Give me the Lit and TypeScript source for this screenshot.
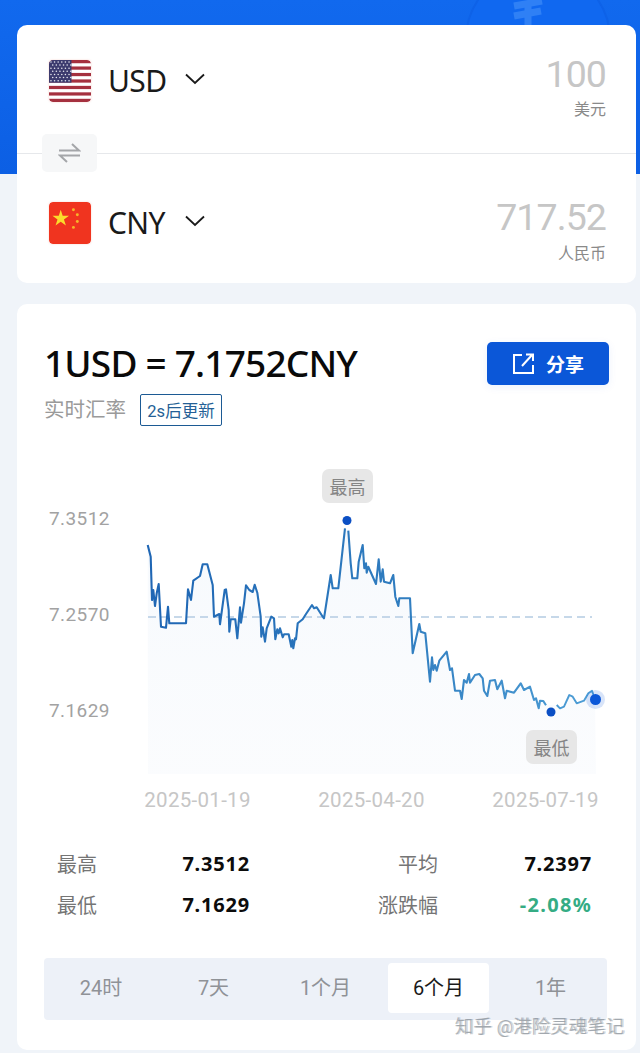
import { LitElement, html, css, svg } from "lit";
import { customElement } from "lit/decorators.js";

const toReal5 = (p: number[][]) => p.map(([x, y]) => [130 + x / 3, 510 + y / 3]);
const toReal6 = (p: number[][]) => p.map(([x, y]) => [380 + x / 3, 600 + y / 3]);
const toReal9 = (p: number[][]) => p.map(([x, y]) => [340 + x / 3, 530 + y / 3]);
const a = toReal5([[53,105],[62,140],[66,270],[70,240],[75,288],[80,250],[86,222],[93,350],[108,353],[114,290],[118,340],[168,340],[174,238],[183,270],[190,212],[210,198],[218,163],[232,163],[248,225],[252,320],[268,312],[270,343],[284,240],[288,238],[296,300],[298,365],[302,328],[316,328],[322,385],[330,292],[333,338],[342,280],[348,226],[358,240],[368,246],[374,224],[382,248],[392,320],[394,380],[398,352],[405,395],[410,355],[424,320],[432,325],[436,388],[442,358],[446,370],[450,355],[458,382],[462,373],[476,373],[484,410],[487,390],[490,415],[495,385],[498,388],[503,340],[518,328],[528,312],[546,285],[552,295],[560,292],[578,320],[582,325],[602,195],[608,235],[625,235],[640,100],[645,55]]);
const b = toReal9([[25,2],[32,100],[37,145],[52,145],[56,95],[68,45],[73,115],[78,100],[80,128],[85,110],[108,162],[116,88],[122,155],[128,118],[132,155],[150,160],[160,135],[166,200],[175,228],[178,205],[210,205]]);
const c = toReal6([[98,160],[118,72],[122,95],[136,100],[150,245],[156,172],[160,210],[165,195],[170,212],[178,182],[200,155],[210,210],[216,205],[225,272],[240,272],[245,297],[252,240],[260,248],[267,222],[270,248],[285,225],[298,222],[308,235],[312,272],[322,288],[330,242],[345,240],[352,268],[365,242],[375,295],[380,272],[402,278],[422,250],[432,270],[450,260],[462,300],[468,295],[476,325],[480,302],[490,303],[498,316]]);
const d = toReal6([[530,315],[540,325],[552,320],[568,285],[578,290],[590,310],[612,302],[625,280],[636,272],[645,298]]);
const toPts = (p: number[][]) => p.map((q) => q.map((n) => n.toFixed(1)).join(",")).join(" ");
const first = [...a];
const second = [...b, ...c];
const all = [...first, ...second, ...d];
// The chart's svg uses the card's coordinates: origin at the page point (17,304).
const OX = 17, OY = 304;

@customElement("app-root")
export class AppRoot extends LitElement {
  static styles = css`
    :host {
      display: block;
      width: 640px;
      height: 1053px;
      position: relative;
      overflow: hidden;
      background: #f0f4f9;
      font-family: "Roboto", "Noto Sans CJK SC", sans-serif;
    }
    .hero {
      position: absolute;
      left: 0; top: 0; right: 0;
      height: 174px;
      background: linear-gradient(180deg, #1169ee 0%, #0c5fe4 100%);
      overflow: hidden;
    }
    .content { position: relative; padding: 25px 4px 0 17px; display: flex; flex-direction: column; gap: 21px; }
    .card { background: #fff; border-radius: 10px; position: relative; }
    .ex { height: 258px; display: flex; flex-direction: column; }
    .row { flex: 1; display: flex; align-items: flex-start; justify-content: space-between; padding: 0 30px 0 32px; }
    .row.top { height: 129px; flex: none; padding-top: 35px; box-sizing: border-box; border-bottom: 1px solid #e6e8eb; }
    .row.bot { padding-top: 48px; }
    .left { display: flex; align-items: center; }
    .flag { width: 42px; height: 42px; border-radius: 4px; display: block; box-shadow: 0 0 2px rgba(235, 110, 90, 0.35); }
    .code { font-size: 30px; line-height: 42px; color: #1a1a1a; margin-left: 17px; width: 61px; font-family: "Noto Sans", sans-serif; letter-spacing: -0.6px; }
    .chev { margin-left: 16px; margin-top: -4px; }
    .val { text-align: right; margin-top: -5px; }
    .bot .val { margin-top: -4px; }
    .num { font-size: 37.5px; font-weight: 400; line-height: 38px; color: #c6c6c6; letter-spacing: -0.9px; }
    .unit { font-size: 16px; line-height: 22px; color: #8a8a8a; margin-top: 6px; }
    .bot .unit { margin-top: 7px; }
    .swap {
      position: absolute; left: 25px; top: 109px; width: 55px; height: 38px;
      background: #f6f7f8; border-radius: 5px;
      display: flex; align-items: center; justify-content: center;
    }
    .chart-card { height: 746px; box-sizing: border-box; }
    .head { display: flex; justify-content: space-between; padding: 37px 27px 0; }
    .rate { font-size: 37px; line-height: 44px; font-weight: 500; color: #0a0a0a; font-family: "Noto Sans", sans-serif; letter-spacing: -0.8px; }
    .share {
      width: 122px; height: 43px; background: #0b57d8; border-radius: 5px; color: #fff; border: 0;
      display: flex; align-items: center; justify-content: center; gap: 11px;
      font-size: 19px; font-weight: 700; font-family: "Noto Sans CJK SC", sans-serif;
      box-shadow: 0 2px 8px rgba(11, 87, 216, 0.08); margin-top: 1px;
    }
    .sub { display: flex; align-items: center; margin-top: 9px; padding: 0 27px; }
    .sub .t { font-size: 20.5px; color: #9a9a9a; width: 96px; line-height: 32px; }
    .tag {
      height: 32px; width: 82px; box-sizing: border-box; border: 1.5px solid #1c5a94; border-radius: 2px;
      color: #245f96; font-size: 16.5px; display: flex; align-items: center; justify-content: center;
    }
    .chart { position: relative; height: 417px; }
    .plot { position: absolute; left: 0; top: 0; width: 619px; height: 417px; }
    .yl { position: absolute; left: 32px; font-size: 19px; color: #a2a2a2; line-height: 22px; letter-spacing: 0.4px; }
    .xl { position: absolute; top: 362px; font-size: 20.5px; color: #c6c6c6; line-height: 24px; width: 120px; text-align: center; letter-spacing: 0.3px; white-space: nowrap; }
    .pill {
      position: absolute; width: 51px; height: 34px; border-radius: 7px; background: #e7e7e7; color: #858585;
      font-size: 18px; display: flex; align-items: center; justify-content: center;
    }
    .stats {
      margin-left: 40px; width: 535px;
      display: grid; grid-template-columns: 113px 80px 188px 1fr; grid-auto-rows: 41px; align-items: center;
    }
    .lab { font-size: 20px; color: #757575; }
    .lab.r { text-align: right; }
    .v { font-size: 20px; font-weight: 700; color: #0c0c0c; text-align: right; letter-spacing: 0.8px; font-family: "Noto Sans", sans-serif; white-space: nowrap; justify-self: end; }
    .v.down { color: #35ac84; letter-spacing: 1.3px; }
    .tabs {
      margin: 33px 0 0 27px; width: 563px; height: 62px; box-sizing: border-box;
      background: #edf1f8; border-radius: 4px; padding: 5px 0 7px;
      display: grid; grid-template-columns: 114px 111px 119px 101px 118px; align-items: stretch;
      font-size: 20px; color: #8f9297;
    }
    .tabs div { display: flex; align-items: center; justify-content: center; border-radius: 4px; padding-bottom: 4px; box-sizing: border-box; }
    .tabs .on { background: #fff; color: #1a1a1a; }
    .tabs .m1 { padding-right: 6px; }
    .tabs .y1 { padding-left: 5px; }
    .mark {
      position: absolute; right: 16px; top: 1016px; font-size: 18.5px; line-height: 22px; color: rgba(110, 120, 130, 0.5);
      text-shadow: 1.5px 0 rgba(110, 120, 130, 0.3);
    }
  `;

  render() {
    const ox = (p: number[][]) => p.map(([x, y]) => [x - OX, y - OY]);
    const area = toPts(ox(all)) + ` ${(596 - OX).toFixed(1)},470 ${(148 - OX).toFixed(1)},470`;
    return html`
      <div class="hero">
        <svg width="640" height="174" viewBox="0 0 640 174">
          <circle cx="538" cy="40" r="72" fill="#1068f0" stroke="#0e62e8" stroke-width="2"></circle>
          <path d="M514 6 L542 1 M514 16 L541 11 M528 3 V26" stroke="#2f80f5" stroke-width="7" fill="none"></path>
        </svg>
      </div>
      <div class="content">
        <section class="card ex">
          <div class="row top">
            <div class="left">
              <svg class="flag" viewBox="0 0 43 43">
                <defs><clipPath id="fc"><rect width="43" height="43" rx="4"></rect></clipPath></defs>
                <g clip-path="url(#fc)">
                  <rect width="43" height="43" fill="#fff"></rect>
                  ${[0, 1, 2, 3, 4, 5, 6].map((i) => svg`<rect y="${i * 6.62}" width="43" height="3.31" fill="#a5313f"></rect>`)}
                  <rect width="23" height="23.2" fill="#3c3b6e"></rect>
                  ${[0, 1, 2, 3, 4, 5, 6].map((r) =>
                    [0, 1, 2, 3, 4, 5].map((k) => svg`<circle cx="${2 + k * 3.7 + (r % 2) * 1.8}" cy="${2 + r * 3.2}" r="0.8" fill="#e6e6ee"></circle>`)
                  )}
                </g>
              </svg>
              <span class="code">USD</span>
              <svg class="chev" width="20" height="12" viewBox="0 0 20 12"><path d="M1 1.5 L10 10 L19 1.5" fill="none" stroke="#1a1a1a" stroke-width="1.8"></path></svg>
            </div>
            <div class="val"><div class="num">100</div><div class="unit">美元</div></div>
          </div>
          <div class="row bot">
            <div class="left">
              <svg class="flag" viewBox="0 0 43 43">
                <rect width="43" height="43" rx="4" fill="#f0341f"></rect>
                <polygon points="12,8 14,14 20.5,14 15.3,18 17.3,24 12,20.3 6.7,24 8.7,18 3.5,14 10,14" fill="#fbdc2c"></polygon>
                <circle cx="25" cy="8" r="1.5" fill="#f7b52a"></circle>
                <circle cx="29" cy="13" r="1.5" fill="#f7b52a"></circle>
                <circle cx="29" cy="20" r="1.5" fill="#f7b52a"></circle>
                <circle cx="25" cy="26" r="1.5" fill="#f7b52a"></circle>
              </svg>
              <span class="code">CNY</span>
              <svg class="chev" width="20" height="12" viewBox="0 0 20 12"><path d="M1 1.5 L10 10 L19 1.5" fill="none" stroke="#1a1a1a" stroke-width="1.8"></path></svg>
            </div>
            <div class="val"><div class="num">717.52</div><div class="unit">人民币</div></div>
          </div>
          <div class="swap">
            <svg width="23" height="20" viewBox="0 0 23 20" fill="none" stroke="#a4a6a9" stroke-width="2">
              <path d="M1 7.5 H21 L14 1"></path>
              <path d="M22 12.5 H2 L9 19"></path>
            </svg>
          </div>
        </section>
        <section class="card chart-card">
          <div class="head">
            <div class="rate">1USD = 7.1752CNY</div>
            <button class="share">
              <svg width="23" height="22" viewBox="0 0 23 22" fill="none" stroke="#fff" stroke-width="2">
                <path d="M10 2 H2 V20 H21 V12"></path>
                <path d="M10 13 L20 2 M14 1.500 H21 V8"></path>
              </svg>
              <span>分享</span>
            </button>
          </div>
          <div class="sub">
            <span class="t">实时汇率</span>
            <span class="tag">2s后更新</span>
          </div>
          <div class="chart">
            <svg class="plot" viewBox="0 122 619 417">
              <defs>
                <linearGradient id="ar" x1="0" y1="0" x2="0" y2="1">
                  <stop offset="0" stop-color="#e3edf8" stop-opacity="0.3"></stop>
                  <stop offset="1" stop-color="#eef3fa" stop-opacity="0.25"></stop>
                </linearGradient>
                <linearGradient id="ln" gradientUnits="userSpaceOnUse" x1="131" y1="0" x2="578" y2="0">
                  <stop offset="0" stop-color="#1f66b4"></stop>
                  <stop offset="0.55" stop-color="#2f7cbf"></stop>
                  <stop offset="1" stop-color="#4f9fd6"></stop>
                </linearGradient>
              </defs>
              <polygon points="${area}" fill="url(#ar)"></polygon>
              <line x1="131" y1="313" x2="575" y2="313" stroke="#b4cbe2" stroke-width="1.4" stroke-dasharray="8 5"></line>
              <polyline points="${toPts(ox(first))}" fill="none" stroke="url(#ln)" stroke-width="2.1" stroke-linejoin="round"></polyline>
              <polyline points="${toPts(ox(second))}" fill="none" stroke="url(#ln)" stroke-width="2.1" stroke-linejoin="round"></polyline>
              <polyline points="${toPts(ox(d))}" fill="none" stroke="url(#ln)" stroke-width="1.9" stroke-linejoin="round"></polyline>
              <circle cx="330" cy="216.500" r="4.500" fill="#0b4fc4"></circle>
              <circle cx="534" cy="408" r="4.500" fill="#0b4fc4"></circle>
              <circle cx="578.500" cy="395.500" r="9.500" fill="#0b57d8" fill-opacity="0.16"></circle>
              <circle cx="578.500" cy="395.500" r="5.500" fill="#0b57d8"></circle>
            </svg>
            <div class="pill" style="left:305px;top:43px">最高</div>
            <div class="pill" style="left:509px;top:304px">最低</div>
            <div class="yl" style="top:82px">7.3512</div>
            <div class="yl" style="top:178px">7.2570</div>
            <div class="yl" style="top:274px">7.1629</div>
            <div class="xl" style="left:120.500px">2025-01-19</div>
            <div class="xl" style="left:294.500px">2025-04-20</div>
            <div class="xl" style="left:468.500px">2025-07-19</div>
          </div>
          <div class="stats">
            <span class="lab">最高</span><span class="v">7.3512</span><span class="lab r">平均</span><span class="v">7.2397</span>
            <span class="lab">最低</span><span class="v">7.1629</span><span class="lab r">涨跌幅</span><span class="v down">-2.08%</span>
          </div>
          <div class="tabs">
            <div>24时</div><div>7天</div><div class="m1">1个月</div><div class="on">6个月</div><div class="y1">1年</div>
          </div>
        </section>
      </div>
      <div class="mark">知乎 @港险灵魂笔记</div>
    `;
  }
}
